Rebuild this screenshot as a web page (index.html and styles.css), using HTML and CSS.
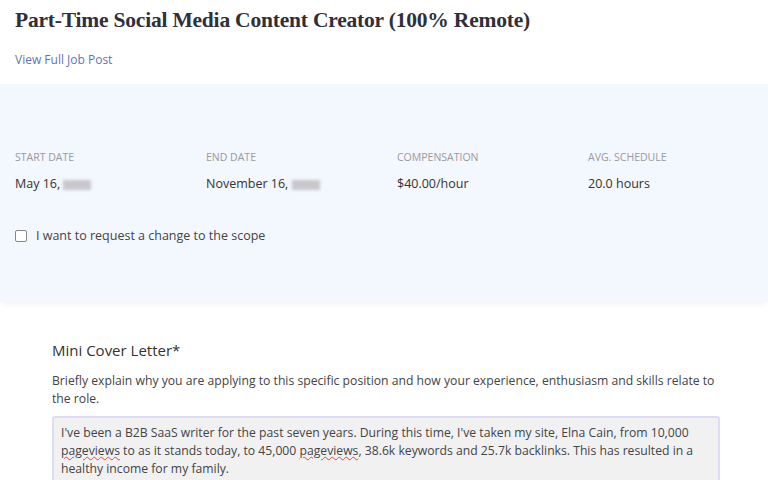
FILE: index.html
```html
<!DOCTYPE html>
<html lang="en">
<head>
    <meta charset="UTF-8">
    <title>Contract Offer</title>
    <link rel="stylesheet" href="styles.css">
</head>
<body>
    <div class="job-header">
        <h1>Part-Time Social Media Content Creator (100% Remote)</h1>
        <a class="job-link" href="#">View Full Job Post</a>
    </div>

    <div class="terms">
        <div class="terms-grid">
            <div class="term">
                <div class="term-label">Start Date</div>
                <div class="term-value">May 16, <span class="blur"></span></div>
            </div>
            <div class="term">
                <div class="term-label">End Date</div>
                <div class="term-value">November 16, <span class="blur"></span></div>
            </div>
            <div class="term">
                <div class="term-label">Compensation</div>
                <div class="term-value">$40.00/hour</div>
            </div>
            <div class="term">
                <div class="term-label">Avg. Schedule</div>
                <div class="term-value">20.0 hours</div>
            </div>
        </div>
        <label class="scope-check">
            <span class="box"></span>
            I want to request a change to the scope
        </label>
    </div>

    <div class="letter">
        <h2>Mini Cover Letter*</h2>
        <p class="hint">Briefly explain why you are applying to this specific position and how your experience, enthusiasm and skills relate to the role.</p>
        <div class="letter-box">
            I've been a B2B SaaS writer for the past seven years. During this time, I've taken my site, Elna Cain, from 10,000
            <span class="typo">pageviews</span> to as it stands today, to 45,000 <span class="typo">pageviews</span>, 38.6k keywords and 25.7k backlinks. This has resulted in a
            healthy income for my family.<br>
            Within 100 posts and over a decade of experience in the freelance writing space I also
        </div>
    </div>
</body>
</html>
```

FILE: styles.css
```css
body {
    margin: 0;
    font-family: 'Open Sans', sans-serif;
    color: #333;
    background: #fff;
    overflow: hidden;
}

.job-header {
    padding: 8px 15px 0;
    height: 76px;
}

.job-header h1 {
    font-family: 'Liberation Serif', serif;
    font-size: 21.5px;
    font-weight: bold;
    color: #2f2f3a;
    margin: 0 0 14px;
    letter-spacing: -0.2px;
}

.job-link {
    font-size: 12px;
    color: #5f74b6;
    text-decoration: none;
}

.terms {
    background: #f3f7fe;
    padding: 66px 15px 58px;
    box-shadow: 0 4px 6px -3px rgba(0, 0, 0, 0.08);
}

.terms-grid {
    display: grid;
    grid-template-columns: repeat(4, 191px);
}

.term-label {
    font-size: 10.5px;
    text-transform: uppercase;
    color: #9a9a9a;
    margin-bottom: 11px;
}

.term-value {
    font-size: 12.5px;
    color: #333;
}

.blur {
    display: inline-block;
    width: 28px;
    height: 10px;
    background: #c8c8cc;
    filter: blur(1.5px);
    vertical-align: middle;
}

.scope-check {
    display: flex;
    align-items: center;
    gap: 9px;
    margin-top: 35px;
    font-size: 12.5px;
    color: #444;
}

.box {
    width: 10px;
    height: 10px;
    border: 1px solid #888;
    border-radius: 2px;
    background: #fff;
}

.letter {
    padding: 38px 48px 0 52px;
}

.letter h2 {
    font-size: 15px;
    font-weight: 500;
    color: #333;
    margin: 0 0 12px;
}

.hint {
    font-size: 12.2px;
    line-height: 18px;
    color: #444;
    margin: 0 0 8px;
}

.letter-box {
    background: #f1f1f2;
    border: 2px solid #dedcf4;
    border-radius: 3px;
    padding: 6px 7px 4px;
    font-size: 12.2px;
    line-height: 18px;
    color: #444;
    height: 70px;
    overflow: hidden;
}

.typo {
    text-decoration: underline wavy #d84a4a;
    text-decoration-thickness: 1px;
}
```
